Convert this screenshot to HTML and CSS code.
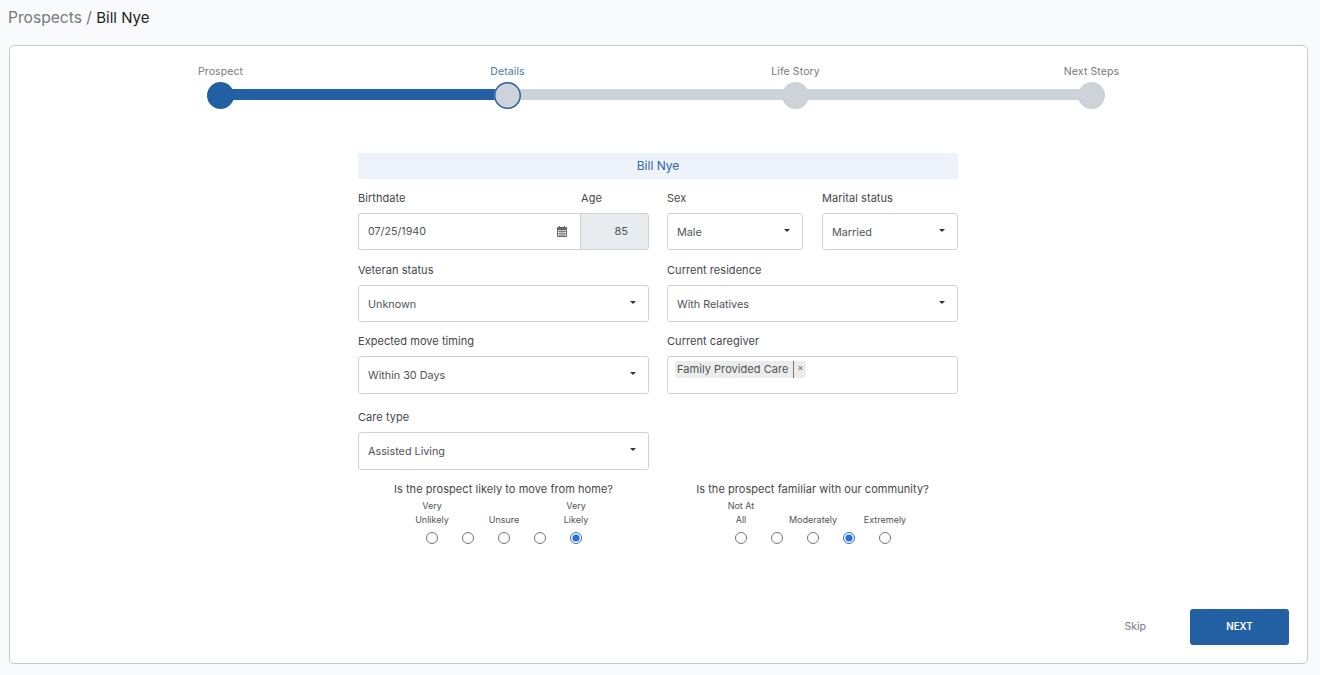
FILE: index.html
```html
<!DOCTYPE html>
<html lang="en">
<head>
<meta charset="utf-8">
<title>Bill Nye</title>
<link rel="stylesheet" href="styles.css">
</head>
<body>
<header class="crumbs"><span class="crumb-parent">Prospects /</span> <span class="crumb-current">Bill Nye</span></header>
<main class="card">
  <ol class="stepper">
    <li class="step step-done step-a"><span class="step-label">Prospect</span><span class="step-dot"></span></li>
    <li class="step step-current step-c"><span class="step-label">Details</span><span class="step-dot"></span></li>
    <li class="step step-b"><span class="step-label">Life Story</span><span class="step-dot"></span></li>
    <li class="step step-last"><span class="step-label">Next Steps</span><span class="step-dot"></span></li>
  </ol>
  <form class="form">
    <h2 class="form-title">Bill Nye</h2>
    <div class="grid">
      <div class="cell cell-split">
        <div class="pair-labels"><label class="lbl">Birthdate</label><label class="lbl lbl-age">Age</label></div>
        <div class="input-group">
          <div class="date-field"><span>07/25/1940</span>
            <svg class="cal" viewBox="0 0 10 11" width="10" height="11"><path fill="#666" d="M2 0h1v1h4V0h1v1h1.2c.4 0 .8.4.8.8V10c0 .5-.4 1-.8 1H.8C.4 11 0 10.500 0 10V1.800C0 1.400.4 1 .8 1H2zM1 4v1.300h1.600V4zm2.400 0v1.300h1.200V4zm2 0v1.300h1.200V4zm2 0v1.300H9V4zM1 6.100v1.300h1.600V6.100zm2.400 0v1.300h1.200V6.100zm2 0v1.300h1.200V6.100zm2 0v1.300H9V6.100zM1 8.200v1.600h1.600V8.200zm2.400 0v1.600h1.200V8.200zm2 0v1.600h1.200V8.200zm2 0v1.600H9V8.200z"/></svg>
          </div>
          <div class="age-field">85</div>
        </div>
      </div>
      <div class="cell cell-split">
        <div class="duo">
          <div><label class="lbl">Sex</label><div class="select"><span>Male</span><i class="caret"></i></div></div>
          <div><label class="lbl">Marital status</label><div class="select"><span>Married</span><i class="caret"></i></div></div>
        </div>
      </div>
      <div class="cell cell-short"><label class="lbl">Veteran status</label><div class="select"><span>Unknown</span><i class="caret"></i></div></div>
      <div class="cell cell-short"><label class="lbl">Current residence</label><div class="select"><span>With Relatives</span><i class="caret"></i></div></div>
      <div class="cell cell-tall"><label class="lbl">Expected move timing</label><div class="select select-tall"><span>Within 30 Days</span><i class="caret"></i></div></div>
      <div class="cell cell-tall"><label class="lbl">Current caregiver</label>
        <div class="multi"><span class="tag"><span class="tag-text">Family Provided Care</span><span class="tag-x">×</span></span></div>
      </div>
      <div class="cell cell-last"><label class="lbl">Care type</label><div class="select select-tall"><span>Assisted Living</span><i class="caret"></i></div></div>
    </div>
    <div class="questions">
      <fieldset class="question">
        <legend class="q-text">Is the prospect likely to move from home?</legend>
        <div class="scale">
          <label class="opt"><span class="opt-text">Very Unlikely</span><input type="radio" name="move"></label>
          <label class="opt"><span class="opt-text"></span><input type="radio" name="move"></label>
          <label class="opt"><span class="opt-text">Unsure</span><input type="radio" name="move"></label>
          <label class="opt"><span class="opt-text"></span><input type="radio" name="move"></label>
          <label class="opt"><span class="opt-text">Very Likely</span><input type="radio" name="move" checked></label>
        </div>
      </fieldset>
      <fieldset class="question">
        <legend class="q-text">Is the prospect familiar with our community?</legend>
        <div class="scale">
          <label class="opt"><span class="opt-text">Not At All</span><input type="radio" name="fam"></label>
          <label class="opt"><span class="opt-text"></span><input type="radio" name="fam"></label>
          <label class="opt"><span class="opt-text">Moderately</span><input type="radio" name="fam"></label>
          <label class="opt"><span class="opt-text"></span><input type="radio" name="fam" checked></label>
          <label class="opt"><span class="opt-text">Extremely</span><input type="radio" name="fam"></label>
        </div>
      </fieldset>
    </div>
  </form>
  <footer class="actions"><a class="skip">Skip</a><button type="button" class="next">NEXT</button></footer>
</main>
</body>
</html>
```
FILE: styles.css
```css
* { box-sizing: border-box; }
html, body { height: 100%; }
body {
  margin: 0;
  height: 675px;
  overflow: hidden;
  background: #f9fafc;
  font-family: Inter, "Open Sans", sans-serif;
  color: #4a4a4a;
  display: flex;
  flex-direction: column;
}
.crumbs { height: 45px; padding: 8px 0 0 8px; font-size: 15.600px; line-height: 20px; flex: none; }
.crumb-parent { color: #77797c; }
.crumb-current { color: #1d1f22; font-size: 15px; }
.card {
  width: 1299px;
  height: 619px;
  margin-left: 9px;
  background: #fff;
  border: 1px solid #c6cad0;
  border-radius: 5px;
  position: relative;
  display: flex;
  flex-direction: column;
}
.stepper {
  list-style: none;
  margin: 19px 0 0;
  padding: 0 0 0 197px;
  display: flex;
  height: 45px;
  flex: none;
}
.step { position: relative; display: flex; flex-direction: column; align-items: flex-start; }
.step-a { width: 287px; }
.step-c { width: 288px; }
.step-b { width: 296px; }
.step-last { width: 27px; }
.step-label {
  width: 27px;
  display: flex;
  justify-content: center;
  white-space: nowrap;
  font-size: 10.500px;
  letter-spacing: .1px;
  line-height: 14px;
  color: #77797c;
}
.step-dot {
  display: block;
  width: 27px;
  height: 27px;
  margin-top: 3px;
  border-radius: 50%;
  background: #ced2d9;
  position: relative;
  z-index: 1;
}
.step::after {
  content: "";
  position: absolute;
  left: 13px;
  width: 100%;
  top: 24px;
  height: 11px;
  background: #ced2d9;
}
.step-last::after { display: none; }
.step-done .step-dot { background: #235fa3; }
.step-done::after { background: #235fa3; }
.step-current .step-label { color: #4a78ac; }
.step-current .step-dot { box-shadow: inset 0 0 0 1.500px #2a64a5; }
.form { width: 600px; margin: 43px 0 0 348px; flex: none; }
.form-title {
  margin: 0 0 11px;
  height: 26px;
  background: #eef2fa;
  color: #2f68a5;
  font-size: 12px;
  font-weight: 400;
  line-height: 26px;
  text-align: center;
}
.grid { display: grid; grid-template-columns: 291px 291px; column-gap: 18px; }
.cell { height: 72px; }
.cell-short { height: 71px; }
.cell-tall { height: 76px; }
.cell-last { height: 75px; }
.lbl { display: block; font-size: 11px; letter-spacing: .05px; line-height: 16px; height: 16px; margin-bottom: 7px; color: #44474b; }
.pair-labels { display: flex; justify-content: space-between; }
.lbl-age { width: 68px; }
.input-group { display: flex; height: 37px; }
.date-field {
  flex: 1;
  border: 1px solid #ced2d9;
  border-right: 0;
  border-radius: 3px 0 0 3px;
  background: #fff;
  display: flex;
  align-items: center;
  justify-content: space-between;
  padding: 0 13px 0 9px;
  font-size: 10.700px;
  color: #505356;
}
.cal { display: block; }
.age-field {
  width: 69px;
  background: #e9ecef;
  border: 1px solid #ced2d9;
  border-radius: 0 3px 3px 0;
  font-size: 11px;
  line-height: 35px;
  text-align: right;
  padding-right: 20px;
  color: #505356;
}
.duo { display: grid; grid-template-columns: 136px 136px; column-gap: 19px; }
.select {
  height: 37px;
  border: 1px solid #ced2d9;
  border-radius: 3px;
  background: #fff;
  display: flex;
  align-items: center;
  justify-content: space-between;
  padding: 1px 12px 0 9px;
  font-size: 10.800px;
  color: #505356;
}
.select-tall { height: 38px; padding-top: 0; }
.caret {
  display: block;
  width: 0;
  height: 0;
  margin-top: -4px;
  border-left: 3.500px solid transparent;
  border-right: 3.500px solid transparent;
  border-top: 3.500px solid #333;
}
.multi {
  height: 38px;
  border: 1px solid #ced2d9;
  border-radius: 3px;
  background: #fff;
  padding: 4px 0 0 7px;
  display: flex;
  align-items: flex-start;
}
.tag {
  display: flex;
  align-items: stretch;
  height: 17px;
  background: #ececec;
  border-radius: 3px;
  font-size: 11px;
  letter-spacing: .05px;
  line-height: 17px;
  color: #505356;
}
.tag-text { padding: 0 5px 0 2px; border-right: 1px solid #777; }
.tag-x { width: 12px; text-align: center; font-size: 9px; line-height: 14px; color: #666; }
.questions { display: grid; grid-template-columns: 291px 291px; column-gap: 18px; margin-top: -3px; }
.question { border: 0; margin: 0; padding: 0; min-width: 0; }
.q-text { padding: 0; width: 100%; text-align: center; font-size: 11px; letter-spacing: .05px; line-height: 16px; color: #44474b; }
.scale { display: flex; justify-content: center; margin-top: 3px; padding-left: 1px; }
.opt { width: 36px; height: 46px; display: flex; flex-direction: column; align-items: center; justify-content: flex-end; }
.opt-text { width: 36px; display: flex; align-items: flex-end; justify-content: center; flex-wrap: wrap; text-align: center; font-size: 9px; line-height: 14px; color: #505356; }
.opt-text:not(:empty) { margin-bottom: 5px; }
.opt input { margin: 0 0 2px; width: 12px; height: 12px; accent-color: #2a6fdb; }
.actions { position: absolute; right: 18px; bottom: 18px; display: flex; align-items: center; gap: 44px; }
.skip { font-size: 10.500px; color: #77797c; padding-bottom: 2px; }
.next {
  width: 99px;
  height: 36px;
  border: 0;
  padding: 0 0 2px;
  border-radius: 3px;
  background: #235fa3;
  color: #fff;
  font-family: inherit;
  font-size: 9.800px;
  font-weight: 600;
}
```
